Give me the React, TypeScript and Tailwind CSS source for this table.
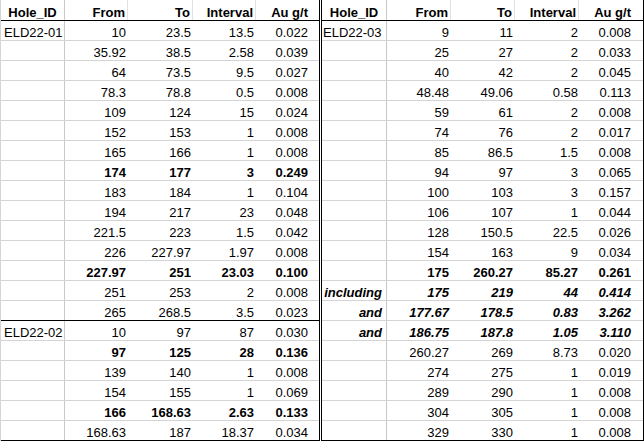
import { FC } from "react";

type Row = {
    id?: string;
    from: string;
    to: string;
    interval: string;
    au: string;
    bold?: boolean;
    italic?: boolean;
    idRight?: boolean;
    sep?: boolean;
};

const left: Row[] = [
    { id: "ELD22-01", from: "10", to: "23.5", interval: "13.5", au: "0.022" },
    { from: "35.92", to: "38.5", interval: "2.58", au: "0.039" },
    { from: "64", to: "73.5", interval: "9.5", au: "0.027" },
    { from: "78.3", to: "78.8", interval: "0.5", au: "0.008" },
    { from: "109", to: "124", interval: "15", au: "0.024" },
    { from: "152", to: "153", interval: "1", au: "0.008" },
    { from: "165", to: "166", interval: "1", au: "0.008" },
    { from: "174", to: "177", interval: "3", au: "0.249", bold: true },
    { from: "183", to: "184", interval: "1", au: "0.104" },
    { from: "194", to: "217", interval: "23", au: "0.048" },
    { from: "221.5", to: "223", interval: "1.5", au: "0.042" },
    { from: "226", to: "227.97", interval: "1.97", au: "0.008" },
    { from: "227.97", to: "251", interval: "23.03", au: "0.100", bold: true },
    { from: "251", to: "253", interval: "2", au: "0.008" },
    { from: "265", to: "268.5", interval: "3.5", au: "0.023", sep: true },
    { id: "ELD22-02", from: "10", to: "97", interval: "87", au: "0.030" },
    { from: "97", to: "125", interval: "28", au: "0.136", bold: true },
    { from: "139", to: "140", interval: "1", au: "0.008" },
    { from: "154", to: "155", interval: "1", au: "0.069" },
    { from: "166", to: "168.63", interval: "2.63", au: "0.133", bold: true },
    { from: "168.63", to: "187", interval: "18.37", au: "0.034", sep: true },
];

const right: Row[] = [
    { id: "ELD22-03", from: "9", to: "11", interval: "2", au: "0.008" },
    { from: "25", to: "27", interval: "2", au: "0.033" },
    { from: "40", to: "42", interval: "2", au: "0.045" },
    { from: "48.48", to: "49.06", interval: "0.58", au: "0.113" },
    { from: "59", to: "61", interval: "2", au: "0.008" },
    { from: "74", to: "76", interval: "2", au: "0.017" },
    { from: "85", to: "86.5", interval: "1.5", au: "0.008" },
    { from: "94", to: "97", interval: "3", au: "0.065" },
    { from: "100", to: "103", interval: "3", au: "0.157" },
    { from: "106", to: "107", interval: "1", au: "0.044" },
    { from: "128", to: "150.5", interval: "22.5", au: "0.026" },
    { from: "154", to: "163", interval: "9", au: "0.034" },
    { from: "175", to: "260.27", interval: "85.27", au: "0.261", bold: true },
    { id: "including", from: "175", to: "219", interval: "44", au: "0.414", bold: true, italic: true, idRight: true },
    { id: "and", from: "177.67", to: "178.5", interval: "0.83", au: "3.262", bold: true, italic: true, idRight: true },
    { id: "and", from: "186.75", to: "187.8", interval: "1.05", au: "3.110", bold: true, italic: true, idRight: true },
    { from: "260.27", to: "269", interval: "8.73", au: "0.020" },
    { from: "274", to: "275", interval: "1", au: "0.019" },
    { from: "289", to: "290", interval: "1", au: "0.008" },
    { from: "304", to: "305", interval: "1", au: "0.008" },
    { from: "329", to: "330", interval: "1", au: "0.008", sep: true },
];

const LeftTable: FC = () => (
    <div className="flex flex-col w-[319px] border-l border-[#d4d4d4]">
        <div className="flex h-[21px] border-b border-black font-bold">
            <div className="w-[64px] flex items-end justify-center border-r border-[#c8c8c8]">Hole_ID</div>
            <div className="w-[63px] flex items-end justify-end pr-[2px] border-r border-[#e2e2e2]">From</div>
            <div className="w-[65px] flex items-end justify-end pr-[2px] border-r border-[#e2e2e2]">To</div>
            <div className="w-[63px] flex items-end justify-end pr-[2px] border-r border-[#e2e2e2]">Interval</div>
            <div className="w-[63px] flex items-end justify-end pr-[11px]">Au g/t</div>
        </div>
        {left.map((r, i) => (
            <div key={i}
                className={`flex h-[20px] border-b ${r.sep ? "border-black" : "border-[#d4d4d4]"} ${r.bold ? "font-bold" : ""} ${r.italic ? "italic" : ""}`}>
                <div className="w-[64px] flex items-end pl-[3px] border-r border-[#c8c8c8]">{r.id}</div>
                <div className="w-[63px] flex items-end justify-end pr-[2px]">{r.from}</div>
                <div className="w-[65px] flex items-end justify-end pr-[2px]">{r.to}</div>
                <div className="w-[63px] flex items-end justify-end pr-[2px]">{r.interval}</div>
                <div className="w-[63px] flex items-end justify-end pr-[11px]">{r.au}</div>
            </div>
        ))}
    </div>
);

const RightTable: FC = () => (
    <div className="flex flex-col w-[322px] border-r border-black">
        <div className="flex h-[21px] border-b border-black font-bold">
            <div className="w-[65px] flex items-end justify-center border-r border-[#c8c8c8]">Hole_ID</div>
            <div className="w-[64px] flex items-end justify-end pr-[2px] border-r border-[#e2e2e2]">From</div>
            <div className="w-[64px] flex items-end justify-end pr-[2px] border-r border-[#e2e2e2]">To</div>
            <div className="w-[64px] flex items-end justify-end pr-[2px] border-r border-[#e2e2e2]">Interval</div>
            <div className="w-[64px] flex items-end justify-end pr-[12px]">Au g/t</div>
        </div>
        {right.map((r, i) => (
            <div key={i}
                className={`flex h-[20px] border-b ${r.sep ? "border-black" : "border-[#d4d4d4]"} ${r.bold ? "font-bold" : ""} ${r.italic ? "italic" : ""}`}>
                <div className={`w-[65px] flex items-end border-r border-[#c8c8c8] ${r.idRight ? "justify-end pr-[4px]" : "pl-[1px]"}`}>{r.id}</div>
                <div className="w-[64px] flex items-end justify-end pr-[2px]">{r.from}</div>
                <div className="w-[64px] flex items-end justify-end pr-[2px]">{r.to}</div>
                <div className="w-[64px] flex items-end justify-end pr-[1px]">{r.interval}</div>
                <div className="w-[64px] flex items-end justify-end pr-[12px]">{r.au}</div>
            </div>
        ))}
    </div>
);

const App: FC = () => {
    return (
        <div className="w-[644px] h-[441px] bg-white text-black flex font-['Liberation_Sans',Arial,sans-serif] text-[13px] leading-[15px]">
            <LeftTable />
            <div className="w-[3px] border-x border-black"></div>
            <RightTable />
        </div>
    );
};

export default App;
